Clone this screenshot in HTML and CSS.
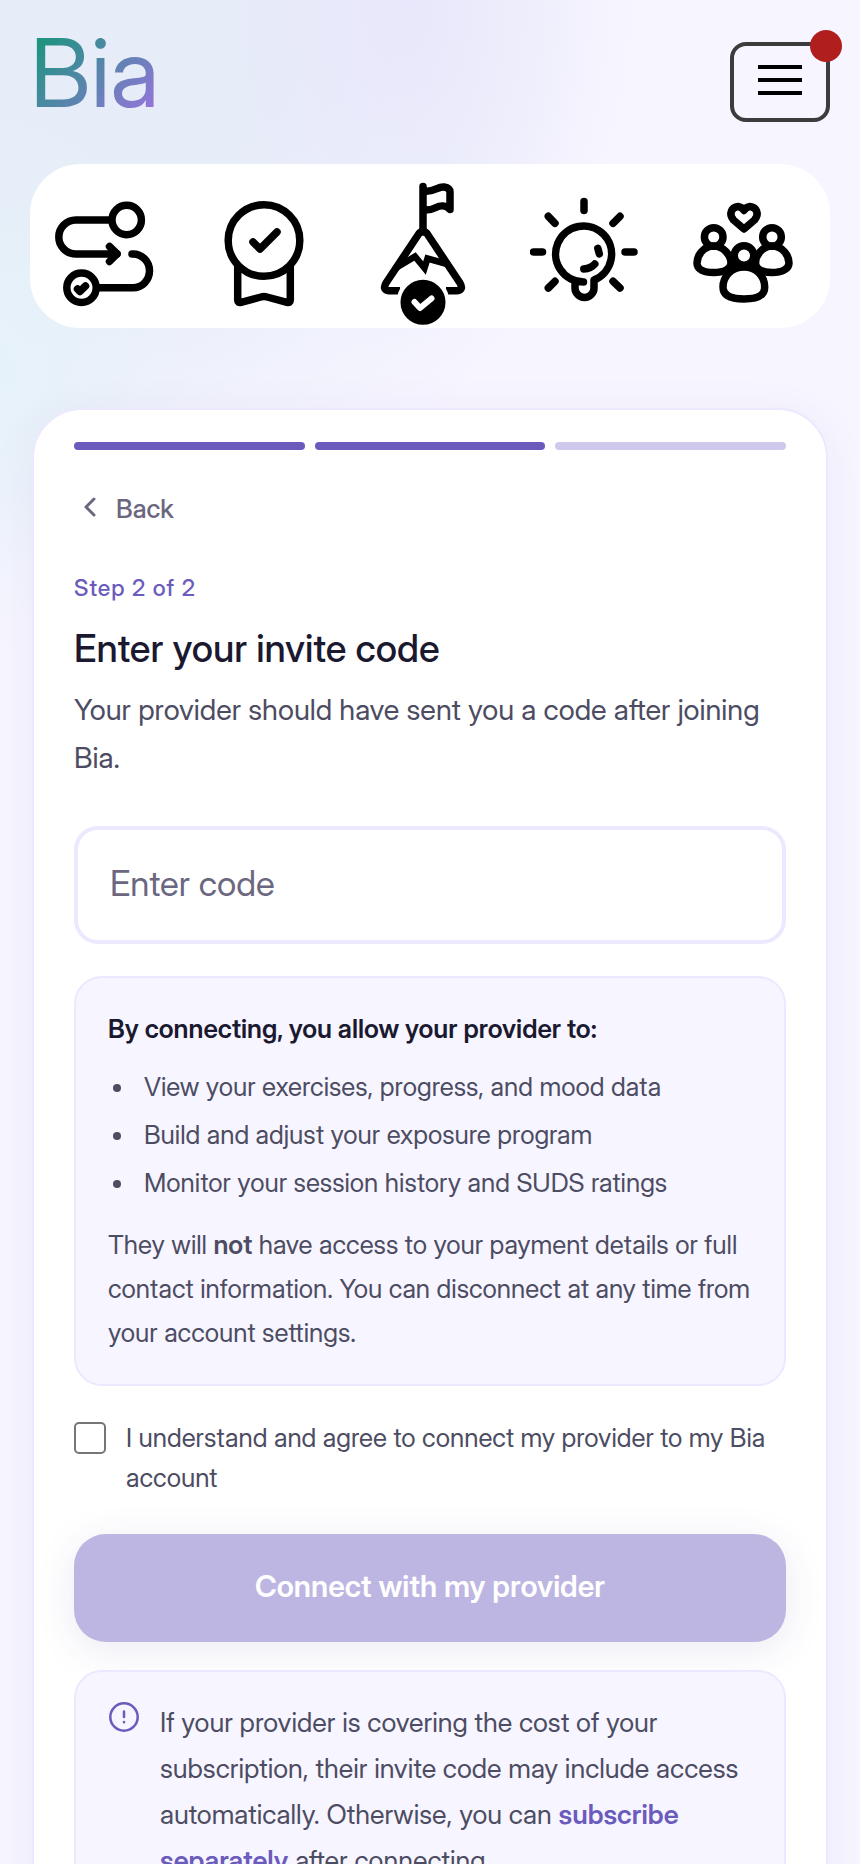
FILE: index.html
```html
<!DOCTYPE html>
<html lang="en">
<head>
    <meta charset="UTF-8">
    <meta name="viewport" content="width=device-width, initial-scale=1.0">
    <title>Bia</title>
    <link rel="stylesheet" href="styles.css">
</head>
<body>

<header class="header">
    <a class="logo" href="#">Bia</a>
    <button class="menu-button" type="button" aria-label="Menu">
        <svg width="44" height="32" viewBox="0 0 44 32" stroke="#000" stroke-width="4">
            <path d="M0 3H44M0 16H44M0 29H44"/>
        </svg>
        <span class="menu-dot"></span>
    </button>
</header>

<nav class="nav">
    <a href="#" aria-label="Path">
        <svg class="nav-icon" viewBox="50 164 120 164">
            <circle cx="126.7" cy="220" r="14.7"/>
            <path d="M111 220H75.8a17 17 0 0 0 0 34H117"/>
            <path d="M109.500 246.500l7.500 7.300-7.500 7.700"/>
            <path d="M132 254h1a16.500 16.850 0 0 1 0 33.700H98"/>
            <circle cx="81.500" cy="287.700" r="14.700"/>
            <path d="M77.500 289l2.300 2.500 5.700-5.500"/>
        </svg>
    </a>
    <a href="#" aria-label="Achievements">
        <svg class="nav-icon" viewBox="210 164 120 164">
            <circle cx="264" cy="240.500" r="35.800"/>
            <path d="M253 242l7 7 17-17"/>
            <path d="M237.700 266v34q0 3 3.300 2.300l20-5.300q3-1 6 0l20 5.300q3.300.7 3.300-2.300v-34"/>
        </svg>
    </a>
    <a href="#" aria-label="Goals">
        <svg class="nav-icon" viewBox="370 164 120 164">
            <path d="M423 186.500V232"/>
            <path d="M424 191C433 193 438 186 444 187Q450 188 450 192V209.500C446 205 440 205.500 436 207.500Q430 210.500 424 210"/>
            <path stroke-linecap="butt" d="M400 290.700H389Q382 290 386 283L419 233.500Q423 229 427 233.500L460 283Q464 290 457 290.700H446"/>
            <path stroke-linecap="butt" stroke-linejoin="miter" stroke-width="6.500" d="M395 268.500L415 256.500L424.500 268L427.500 258.500L449 264.500"/>
            <circle class="solid" cx="423" cy="302.300" r="24.500"/>
            <path class="white" d="M414.500 302l5.500 6 11.500-9.500"/>
        </svg>
    </a>
    <a href="#" aria-label="Tips">
        <svg class="nav-icon" viewBox="530 164 120 164">
            <path d="M583.500 282A28 28 0 1 1 594 280V288A9.300 9.300 0 0 1 575 288V282"/>
            <path d="M584 201.500v9M533.500 252h9M625 252h9M548.300 216.300l6.700 7M620 216.300l-7 7M555 281.300l-6.700 6.700M613 281.300l7 6.700"/>
            <path d="M597.800 248.300l1.500 5.500M583.800 269q7-.5 11-5"/>
        </svg>
    </a>
    <a href="#" aria-label="Community">
        <svg class="nav-icon" viewBox="690 164 120 164">
            <path d="M744 229L733.500 220C728 213.500 732 207 738 206.500Q742 207 744 210.500Q746 207 750 206.500C756 207 760 213.500 754.500 220Z"/>
            <circle cx="713.700" cy="237" r="9.300"/>
            <circle cx="772" cy="237" r="9.300"/>
            <path d="M713.700 246C703 246 697 256 697 263C697 269 703 272.500 713.700 272.500C724 272.500 731 269 731 263C731 256 724 246 713.700 246Z"/>
            <path d="M772 246C762 246 755.500 256 755.500 263C755.500 269 762 272.500 772 272.500C782 272.500 789 269 789 263C789 256 783 246 772 246Z"/>
            <circle cx="744" cy="255.500" r="9.800"/>
            <path fill="#fff" d="M744 267C731 267 723 277 723 287C723 296 731 299 744 299C757 299 764.700 296 764.700 287C764.700 277 757 267 744 267Z"/>
        </svg>
    </a>
</nav>

<main class="card">
    <div class="progress">
        <span class="bar done"></span>
        <span class="bar done"></span>
        <span class="bar"></span>
    </div>

    <button class="back" type="button">
        <svg width="16" height="22" viewBox="0 0 16 22" fill="none" stroke="currentColor" stroke-width="3" stroke-linecap="round" stroke-linejoin="round">
            <path d="M12 2L4 10L12 18"/>
        </svg>
        Back
    </button>

    <p class="step">Step 2 of 2</p>
    <h1 class="title">Enter your invite code</h1>
    <p class="lead">Your provider should have sent you a code after joining Bia.</p>

    <input class="code-input" type="text" placeholder="Enter code" aria-label="Invite code">

    <section class="box consent">
        <h2>By connecting, you allow your provider to:</h2>
        <ul>
            <li>View your exercises, progress, and mood data</li>
            <li>Build and adjust your exposure program</li>
            <li>Monitor your session history and SUDS ratings</li>
        </ul>
        <p>They will <strong>not</strong> have access to your payment details or full contact information. You can disconnect at any time from your account settings.</p>
    </section>

    <label class="agree" for="agree">
        <input type="checkbox" id="agree">
        <span>I understand and agree to connect my provider to my Bia account</span>
    </label>

    <button class="connect" type="button" disabled>Connect with my provider</button>

    <section class="box note">
        <svg width="32" height="32" viewBox="0 0 32 32" fill="none" stroke="#6b5bbd" stroke-width="2.500" stroke-linecap="round">
            <circle cx="16" cy="17" r="13.700"/>
            <path d="M16 11.500V17M16 22V22.200"/>
        </svg>
        <p>If your provider is covering the cost of your subscription, their invite code may include access automatically. Otherwise, you can <a href="#">subscribe separately</a> after connecting.</p>
    </section>
</main>

</body>
</html>
```

FILE: styles.css
```css
* {
    box-sizing: border-box;
}
body {
    font-family: "Inter Display", Inter, "Liberation Sans", sans-serif;
    font-weight: 400;
    margin: 0;
    padding: 30px 30px 40px;
    color: #4c4c62;
    background-color: #f7f5ff;
    background-image:
        radial-gradient(ellipse 320px 460px at 0 370px, #e6f2f9 0%, rgba(230, 242, 249, 0) 60%),
        radial-gradient(ellipse 260px 440px at 400px 0, #e8e7fb 0%, rgba(232, 231, 251, 0) 80%),
        radial-gradient(ellipse 640px 560px at 0 0, #e6edf8 45%, rgba(230, 237, 248, 0) 100%);
    background-repeat: no-repeat;
}
h1, h2, p, ul {
    margin: 0;
}
.header {
    display: flex;
    justify-content: space-between;
    align-items: flex-start;
    height: 104px;
    margin-bottom: 30px;
}
.logo {
    font-size: 95px;
    line-height: 86px;
    text-decoration: none;
    color: transparent;
    background: linear-gradient(135deg, #1f9480 10%, #8f76d6 90%);
    -webkit-background-clip: text;
    background-clip: text;
}
.menu-button {
    position: relative;
    display: flex;
    align-items: center;
    justify-content: center;
    width: 100px;
    height: 80px;
    margin-top: 12px;
    padding: 0 0 4px;
    background: none;
    border: 4px solid #3c3c3c;
    border-radius: 16px;
}
.menu-dot {
    position: absolute;
    top: -16px;
    right: -16px;
    width: 32px;
    height: 32px;
    border-radius: 50%;
    background: #b01e1e;
}
.nav {
    display: grid;
    grid-template-columns: repeat(5, 1fr);
    justify-items: center;
    background: #fff;
    border-radius: 50px;
    margin-bottom: 80px;
}
.nav a {
    display: block;
}
.nav-icon {
    display: block;
    width: 120px;
    height: 164px;
    fill: none;
    stroke: #000;
    stroke-width: 7.5px;
    stroke-linecap: round;
    stroke-linejoin: round;
}
.nav-icon .solid {
    fill: #000;
    stroke: #fff;
    stroke-width: 4px;
}
.nav-icon .white {
    stroke: #fff;
    stroke-width: 6px;
}
.card {
    margin: 0 2px;
    padding: 32px 40px 40px;
    background: #fff;
    border: 2px solid #ece8ff;
    border-radius: 50px;
    box-shadow: 0 8px 48px rgba(60, 50, 140, 0.06);
}
.progress {
    display: flex;
    gap: 10px;
    margin-bottom: 36px;
}
.bar {
    flex: 1;
    height: 8px;
    border-radius: 4px;
    background: #cfc9ec;
}
.bar.done {
    background: #6b5bbd;
}
.back {
    display: flex;
    align-items: center;
    gap: 18px;
    height: 44px;
    padding: 0 8px;
    font: inherit;
    font-size: 26px;
    font-weight: 500;
    color: #6b6780;
    background: none;
    border: 0;
    margin-bottom: 42px;
}
.step {
    font-size: 23px;
    line-height: 32px;
    font-weight: 500;
    letter-spacing: 1px;
    color: #6b5bbd;
    margin-bottom: 20px;
}
.title {
    font-size: 38px;
    line-height: 48px;
    font-weight: 500;
    color: #1a1930;
    margin-bottom: 14px;
}
.lead {
    font-size: 29px;
    line-height: 48px;
    margin-bottom: 44px;
}
.code-input {
    display: block;
    width: 100%;
    height: 118px;
    padding: 0 32px 4px;
    font: inherit;
    font-size: 35px;
    color: #4c4c62;
    background: #fff;
    border: 4px solid #ece8ff;
    border-radius: 24px;
    margin-bottom: 32px;
}
.code-input::placeholder {
    color: #6b6780;
}
.box {
    padding: 28px 32px;
    background: #f7f5ff;
    border: 2px solid #ece8ff;
    border-radius: 28px;
}
.consent {
    font-size: 26px;
    line-height: 44px;
    padding: 29px 32px;
    margin-bottom: 32px;
}
.consent h2 {
    font-size: 26px;
    font-weight: 600;
    color: #1a1930;
    margin-bottom: 12px;
}
.consent ul {
    padding-left: 28px;
    margin-bottom: 16px;
}
.consent li {
    padding-left: 8px;
    line-height: 48px;
}
strong {
    font-weight: 600;
}
.agree {
    display: flex;
    align-items: flex-start;
    gap: 20px;
    font-size: 26px;
    line-height: 40px;
    margin-bottom: 36px;
}
.agree input {
    appearance: none;
    flex: none;
    width: 32px;
    height: 32px;
    margin: 4px 0;
    background: #fff;
    border: 2px solid #767676;
    border-radius: 5px;
}
.agree input:checked {
    background: #6b5bbd;
}
.connect {
    display: block;
    width: 100%;
    height: 108px;
    padding: 0 32px 4px;
    font: inherit;
    font-size: 30px;
    font-weight: 600;
    color: #fff;
    background: #bdb6e2;
    border: 0;
    border-radius: 32px;
    box-shadow: 0 8px 40px rgba(60, 50, 140, 0.1);
    margin-bottom: 28px;
}
.note {
    display: flex;
    align-items: flex-start;
    gap: 20px;
    font-size: 27px;
    line-height: 46px;
}
.note svg {
    flex: none;
}
.note a {
    font-weight: 600;
    color: #6b5bbd;
    text-decoration: none;
}
```
